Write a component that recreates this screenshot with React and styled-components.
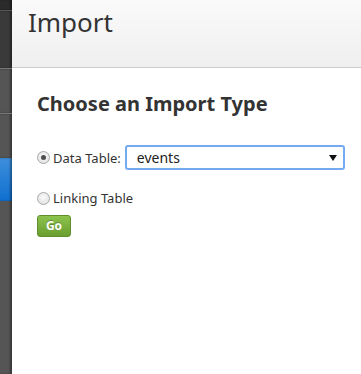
import React from 'react';
import styled, { createGlobalStyle } from 'styled-components';

const GlobalStyle = createGlobalStyle`
  html, body {
    margin: 0;
    padding: 0;
    background: #fff;
    font-family: "Noto Sans", "DejaVu Sans", sans-serif;
    color: #333;
  }
`;

const Layout = styled.div`
  display: flex;
  width: 361px;
  height: 374px;
  overflow: hidden;
`;

const Sidebar = styled.nav`
  width: 12px;
  flex-shrink: 0;
  display: flex;
  flex-direction: column;
  background: #555;
  box-shadow: inset -2px 0 2px rgba(0, 0, 0, 0.35);
`;

const SideBlock = styled.div`
  height: ${({ h }) => h}px;
  background: ${({ bg }) => bg};
  border-bottom: ${({ line }) => (line ? `1px solid ${line}` : 'none')};
  box-shadow: inset -2px 0 2px rgba(0, 0, 0, 0.35);
`;

const Content = styled.div`
  flex: 1;
  display: flex;
  flex-direction: column;
`;

const Header = styled.header`
  height: 68px;
  box-sizing: border-box;
  padding: 4px 0 0 16px;
  background: linear-gradient(#fafafa, #efefef);
  border-bottom: 1px solid #ccc;
`;

const Title = styled.h1`
  margin: 0;
  font-size: 26px;
  font-weight: 400;
  color: #333;
`;

const Main = styled.main`
  padding: 22px 0 0 25px;
`;

const Heading = styled.h2`
  margin: 0 0 28px;
  font-size: 20px;
  font-weight: 700;
  color: #333;
`;

const Row = styled.label`
  display: flex;
  align-items: center;
  gap: 3px;
  font-size: 13px;
  color: #333;
  margin-bottom: ${({ mb }) => mb}px;
`;

const Radio = styled.input.attrs({ type: 'radio' })`
  appearance: none;
  margin: 0;
  width: 13px;
  height: 13px;
  box-sizing: border-box;
  border: 1px solid #a9a9a9;
  border-radius: 50%;
  background: radial-gradient(circle at 50% 40%, #fafafa, #dcdcdc);
  display: grid;
  place-items: center;

  &:checked::after {
    content: '';
    width: 5px;
    height: 5px;
    border-radius: 50%;
    background: #4d4d4d;
  }
`;

const SelectBox = styled.div`
  position: relative;
  margin-left: 1px;
  width: 220px;
  height: 25px;
  box-sizing: border-box;
  border: 2px solid #74aaf2;
  border-radius: 3px;
  display: flex;
  align-items: center;
  padding-left: 10px;
  font-size: 14px;
  color: #222;
`;

const Arrow = styled.span`
  position: absolute;
  right: 6px;
  top: 8px;
  width: 0;
  height: 0;
  border-left: 4px solid transparent;
  border-right: 4px solid transparent;
  border-top: 6px solid #111;
`;

const GoButton = styled.button`
  width: 34px;
  height: 22px;
  padding: 0;
  border: 1px solid #5f8f2a;
  border-radius: 3px;
  background: linear-gradient(#8cc34c, #6a9e30);
  color: #fff;
  font-family: inherit;
  font-size: 12px;
  font-weight: 700;
  text-shadow: 0 -1px 0 rgba(0, 0, 0, 0.25);
`;

export default function App() {
  return (
    <>
      <GlobalStyle />
      <Layout>
        <Sidebar>
          <SideBlock h={10} bg="#2b2b2b" line="#555" />
          <SideBlock h={57} bg="#3a3a3a" line="#777" />
          <SideBlock h={44} bg="#555" line="#777" />
          <SideBlock h={44} bg="#555" />
          <SideBlock h={43} bg="linear-gradient(#3d8fdc, #0f6fcf)" />
        </Sidebar>
        <Content>
          <Header>
            <Title>Import</Title>
          </Header>
          <Main>
            <Heading>Choose an Import Type</Heading>
            <Row mb={19}>
              <Radio name="type" defaultChecked />
              Data Table:
              <SelectBox>
                events
                <Arrow />
              </SelectBox>
            </Row>
            <Row mb={6}>
              <Radio name="type" />
              Linking Table
            </Row>
            <GoButton>Go</GoButton>
          </Main>
        </Content>
      </Layout>
    </>
  );
}
